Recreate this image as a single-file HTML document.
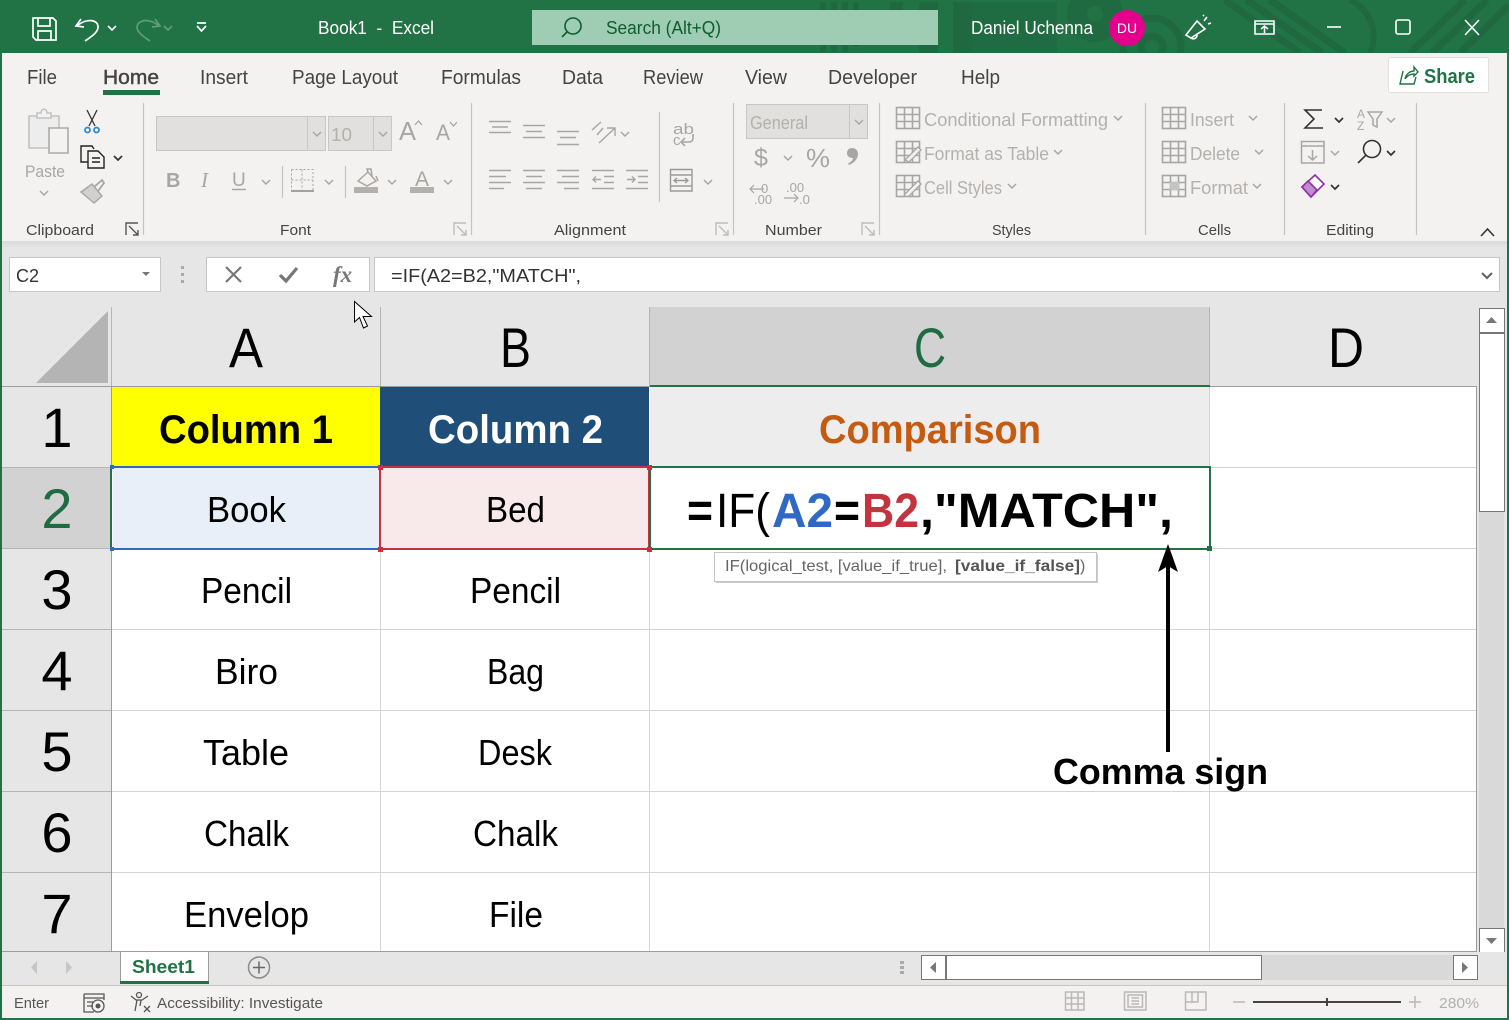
<!DOCTYPE html>
<html lang="en"><head><meta charset="utf-8"><title>Book1 - Excel</title>
<style>
html,body{margin:0;padding:0;width:1509px;height:1020px;overflow:hidden;background:#e6e6e6}
svg{display:block}
text{font-family:"Liberation Sans",Arial,sans-serif;white-space:pre}
.w{fill:#fff;font-size:18px}
.t{fill:#444;font-size:20px}
.g{fill:#444;font-size:15px}
.d{fill:#b3b0ad;font-size:18px}
.h{fill:#000;font-size:56px}
.c{fill:#000;font-size:36px}
.i{fill:none;stroke:#a6a6a6;stroke-width:1.5}
.l{stroke:#d4d4d4;stroke-width:1}
.hl{stroke:#b5b5b5;stroke-width:1}
</style></head><body>
<svg width="1509" height="1020" viewBox="0 0 1509 1020" xmlns="http://www.w3.org/2000/svg">
<defs>
<path id="ch" d="M-4-2 0 2 4-2" fill="none" stroke="#a6a6a6" stroke-width="1.5"/>
<path id="cd" d="M-4-2 0 2 4-2" fill="none" stroke="#333" stroke-width="1.7"/>
<path id="dl" d="M-6 6V-6H6M-3-3 6 6M6 1V6H1" fill="none" stroke="#bdbdbd" stroke-width="1.4"/>
<g id="ti" fill="none" stroke="#a6a6a6" stroke-width="1.6"><rect x="0" y="0" width="23" height="21"/><path d="M0 7H23M0 14H23M8 0V21M16 0V21"/></g>
</defs>
<rect width="1509" height="1020" fill="#e6e6e6"/>

<!-- title bar -->
<rect width="1509" height="53" fill="#217346"/>
<g fill="#1f6840">
<rect x="820" y="2" width="6" height="50"/><rect x="831" y="2" width="6" height="50"/><rect x="842" y="2" width="6" height="50"/><rect x="853" y="2" width="6" height="45"/>
<rect x="890" y="2" width="13" height="18"/><rect x="919" y="2" width="19" height="51"/><rect x="953" y="2" width="19" height="51"/><rect x="972" y="2" width="85" height="51" opacity=".7"/>
</g>
<g fill="none" stroke="#1f6840">
<circle cx="1152" cy="47" r="11" stroke-width="7"/><circle cx="1152" cy="47" r="29" stroke-width="7"/>
<circle cx="1095" cy="14" r="18" stroke-width="20" opacity=".8"/>
<path d="M1225 0 1300 53M1247 0 1322 53M1270 0 1345 53" stroke-width="7"/>
<path d="M1410 53 1465 0M1432 53 1487 0M1460 53 1509 5" stroke-width="7"/>
<path d="M1350 0A40 40 0 0 1 1370 53" stroke-width="6"/>
</g>
<g fill="none" stroke="#fff" stroke-width="1.7">
<path d="M33 18H53L56 21V40H36L33 37ZM38 18V26H50V18M38 40V31H51V40"/>
<path d="M81 19 76 26 84 27M77 26C86 18 99 19 98 28 97 33 91 37 85 41"/>
<path d="M108 26 112 30 116 26" stroke-width="1.6"/>
<path d="M155 19 160 26 152 27M159 26C150 18 137 19 137 28 138 33 144 37 150 41M164 26 168 30 172 26" stroke="#5f9c79"/>
<path d="M197 23H206M197 26 201.500 31 206 26"/>
</g>
<text x="318" y="34" class="w" textLength="116" lengthAdjust="spacingAndGlyphs">Book1  -  Excel</text>
<rect x="532" y="10" width="406" height="35" fill="#9fcdb3"/>
<g fill="none" stroke="#0e5c2f" stroke-width="1.6"><circle cx="573" cy="26" r="8"/><path d="M567 32 562 37"/></g>
<text x="606" y="34" fill="#0e5c2f" font-size="18" textLength="115" lengthAdjust="spacingAndGlyphs">Search (Alt+Q)</text>
<text x="971" y="34" class="w" textLength="122" lengthAdjust="spacingAndGlyphs">Daniel Uchenna</text>
<circle cx="1127" cy="28" r="18" fill="#e3008c"/>
<text x="1127" y="33" fill="#fff" font-size="14" text-anchor="middle">DU</text>
<g fill="none" stroke="#fff" stroke-width="1.6">
<path d="M1186 35 1197 21 1205 29 1191 38ZM1191 38C1194 40 1197 38 1197 35M1204 21 1207 17M1208 24 1211 23M1203 16 1204 15"/>
<path d="M1255 21H1274V34H1255ZM1255 24H1274M1264.500 33V27M1261 29 1264.500 26 1268 29"/>
<path d="M1327 27H1341"/>
<rect x="1396" y="20" width="14" height="14" rx="2"/>
<path d="M1465 20 1479 35M1479 20 1465 35"/>
</g>

<!-- ribbon -->
<rect x="2" y="53" width="1505" height="188" fill="#f3f2f1"/>
<rect x="2" y="241" width="1505" height="8" fill="#dcdcdc"/>
<rect x="2" y="244" width="1505" height="3" fill="#e1e1e1"/>
<rect x="2" y="247" width="1505" height="3" fill="#e6e6e6"/>
<text x="27" y="84" class="t" textLength="30" lengthAdjust="spacingAndGlyphs">File</text>
<text x="103" y="84" class="t" style="stroke:#444;stroke-width:.45" textLength="56" lengthAdjust="spacingAndGlyphs">Home</text>
<rect x="103" y="90" width="57" height="5" fill="#217346"/>
<text x="200" y="84" class="t" textLength="48" lengthAdjust="spacingAndGlyphs">Insert</text>
<text x="292" y="84" class="t" textLength="106" lengthAdjust="spacingAndGlyphs">Page Layout</text>
<text x="441" y="84" class="t" textLength="80" lengthAdjust="spacingAndGlyphs">Formulas</text>
<text x="562" y="84" class="t" textLength="41" lengthAdjust="spacingAndGlyphs">Data</text>
<text x="643" y="84" class="t" textLength="60" lengthAdjust="spacingAndGlyphs">Review</text>
<text x="745" y="84" class="t" textLength="42" lengthAdjust="spacingAndGlyphs">View</text>
<text x="828" y="84" class="t" textLength="89" lengthAdjust="spacingAndGlyphs">Developer</text>
<text x="961" y="84" class="t" textLength="39" lengthAdjust="spacingAndGlyphs">Help</text>
<rect x="1388.500" y="57.500" width="100" height="35" rx="2" fill="#fff" stroke="#e1dfdd"/>
<g fill="none" stroke="#217346" stroke-width="1.4"><path d="M1403 71 1400 84H1414L1416 77M1405 79C1406 74 1410 71 1414 71V67L1418 72 1414 76V74C1410 74 1407 76 1405 79"/></g>
<text x="1424" y="83" fill="#217346" font-size="20" font-weight="700" textLength="51" lengthAdjust="spacingAndGlyphs">Share</text>

<g stroke="#c4c4c4" stroke-width="1.200">
<path d="M143.500 103V235M471.500 103V235M733.500 103V235M879.500 103V235M1145.500 103V235M1284.500 103V235M1416.500 103V235M659.500 112V202M282.500 166V198M345.500 166V198"/>
</g>
<text x="26" y="235" class="g" textLength="68" lengthAdjust="spacingAndGlyphs">Clipboard</text>
<text x="280" y="235" class="g" textLength="31" lengthAdjust="spacingAndGlyphs">Font</text>
<text x="554" y="235" class="g" textLength="72" lengthAdjust="spacingAndGlyphs">Alignment</text>
<text x="765" y="235" class="g" textLength="57" lengthAdjust="spacingAndGlyphs">Number</text>
<text x="992" y="235" class="g" textLength="39" lengthAdjust="spacingAndGlyphs">Styles</text>
<text x="1198" y="235" class="g" textLength="33" lengthAdjust="spacingAndGlyphs">Cells</text>
<text x="1326" y="235" class="g" textLength="48" lengthAdjust="spacingAndGlyphs">Editing</text>
<path d="M126 235V223H138M129 226 138 235M138 230V235H133" fill="none" stroke="#555" stroke-width="1.4"/>
<use href="#dl" x="460" y="229"/><use href="#dl" x="722" y="229"/><use href="#dl" x="868" y="229"/>

<!-- clipboard -->
<g class="i">
<path fill="#ededed" stroke="#c2c2c2" stroke-width="1.600" d="M29 116H59V148H29Z"/>
<path fill="#f3f2f1" stroke="#c2c2c2" stroke-width="1.600" d="M37 118V113H41C41 108 47 108 47 113H51V118Z"/>
<path fill="#f3f2f1" stroke="#aaa" stroke-width="1.600" d="M49 128H68V153H49Z"/>
</g>
<text x="25" y="177" fill="#a6a6a6" font-size="17" textLength="40" lengthAdjust="spacingAndGlyphs">Paste</text>
<use href="#ch" x="44" y="193"/>
<g fill="none" stroke="#333" stroke-width="1.300"><path d="M87 110 95 126M97 110 89 126"/></g>
<g fill="none" stroke="#2b88d8" stroke-width="1.800"><circle cx="87.500" cy="130" r="2.500"/><circle cx="96.500" cy="130" r="2.500"/></g>
<g fill="none" stroke="#222" stroke-width="1.400"><path d="M88 162H81V146H92L94 149"/><path d="M88 151H98L104 157V168H88ZM92 158H100M92 162H100"/></g>
<use href="#cd" x="118" y="158"/>
<path d="M81 192 92 184 102 196 94 203Z" fill="#d0d0d0" stroke="#a6a6a6" stroke-width="1.400"/><path d="M94 187 102 180 104 183 98 191" fill="none" stroke="#a6a6a6" stroke-width="1.800"/>

<!-- font -->
<g fill="#e1e0de" stroke="#c8c6c4" stroke-width="1"><rect x="156.500" y="116.500" width="169" height="34"/><rect x="328.500" y="116.500" width="63" height="34"/><path d="M307.500 116.500V150.500M373.500 116.500V150.500" fill="none"/></g>
<use href="#ch" x="317" y="134"/><use href="#ch" x="383" y="134"/>
<text x="331" y="141" class="d" textLength="21" lengthAdjust="spacingAndGlyphs">10</text>
<text x="399" y="140" fill="#a6a6a6" font-size="26" textLength="17" lengthAdjust="spacingAndGlyphs">A</text><path d="M415 125 418.500 121 422 125" fill="none" stroke="#a6a6a6" stroke-width="1.300"/>
<text x="436" y="140" fill="#a6a6a6" font-size="22" textLength="14" lengthAdjust="spacingAndGlyphs">A</text><path d="M450 122 453.500 126 457 122" fill="none" stroke="#a6a6a6" stroke-width="1.300"/>
<text x="166" y="187" fill="#a6a6a6" font-size="20" font-weight="700">B</text>
<text x="201" y="187" fill="#a6a6a6" font-size="21" font-style="italic" style="font-family:'Liberation Serif',serif">I</text>
<text x="232" y="186" fill="#a6a6a6" font-size="19">U</text><path d="M232 189.500H246" stroke="#a6a6a6" stroke-width="1.500"/>
<use href="#ch" x="266" y="182"/>
<path d="M291.500 169.500H313V190M291.500 169.500V190M302 169.500V190M291.500 180H313" fill="none" stroke="#a6a6a6" stroke-dasharray="2 2"/><path d="M291 191H314" stroke="#888" stroke-width="1.500"/>
<use href="#ch" x="329" y="182"/>
<path d="M358 181 368 172 376 181 367 186ZM368 172 367 169H371L372 176M376 176 378 181" fill="none" stroke="#a6a6a6" stroke-width="1.500"/><rect x="354" y="187" width="24" height="6" fill="#b3b0ad"/>
<use href="#ch" x="392" y="182"/>
<text x="415" y="186" fill="#a6a6a6" font-size="21">A</text><rect x="410" y="187" width="24" height="6" fill="#b3b0ad"/>
<use href="#ch" x="448" y="182"/>

<!-- alignment -->
<g fill="none" stroke="#a6a6a6" stroke-width="1.400">
<path d="M489 121.500H511M492 127H508M489 132.500H511"/>
<path d="M523 125.500H545M526 131.500H542M523 137.500H545"/>
<path d="M557 131.500H579M560 137.500H576M557 144.500H579"/>
<path d="M599 143 615 128M607 128H615V136M592 130 601 122M597 135 603 128"/>
<path d="M489 170.500H511M489 176.500H506M489 182.500H511M489 188.500H504"/>
<path d="M523 170.500H545M526 176.500H542M523 182.500H545M526 188.500H542"/>
<path d="M557 170.500H579M562 176.500H579M557 182.500H579M564 188.500H579"/>
<path d="M592 170.500H614M604 176.500H614M604 182.500H614M592 188.500H614M601 179.500H593M596 176.500 593 179.500 596 182.500"/>
<path d="M626 170.500H648M638 176.500H648M638 182.500H648M626 188.500H648M627 179.500H635M632 176.500 635 179.500 632 182.500"/>
<path d="M670.500 169.500H692V191H670.500ZM670.500 175H692M670.500 186H692M674 180.500H688M677 178 674 180.500 677 183M685 178 688 180.500 685 183" stroke="#999"/>
<path d="M693 134V138C693 141 691 142 689 142H682M685 138 681 142 685 146" stroke-width="1.600"/>
</g>
<use href="#ch" x="625" y="134"/><use href="#ch" x="708" y="182"/>
<text x="673" y="134" fill="#a6a6a6" font-size="15" textLength="21" lengthAdjust="spacingAndGlyphs">ab</text>
<text x="673" y="145" fill="#a6a6a6" font-size="15">c</text>

<!-- number -->
<g fill="#e1e0de" stroke="#c8c6c4"><rect x="746.500" y="104.500" width="121" height="34"/><path d="M849.500 104.500V138.500" fill="none"/></g>
<use href="#ch" x="859" y="122"/>
<text x="750" y="129" class="d" textLength="58" lengthAdjust="spacingAndGlyphs">General</text>
<text x="754" y="166" fill="#a6a6a6" font-size="25">$</text><use href="#ch" x="788" y="158"/>
<text x="806" y="167" fill="#a6a6a6" font-size="26" textLength="24" lengthAdjust="spacingAndGlyphs">%</text>
<path d="M852 148C856 148 858 151 858 154 858 159 854 163 849 165L848 163.500C851 162 853 160 853 158 849 158 847 156 847 153 847 150 849 148 852 148Z" fill="#a6a6a6"/>
<text x="761" y="193" fill="#a6a6a6" font-size="13">0</text><text x="754" y="204" fill="#a6a6a6" font-size="13">.00</text>
<text x="786" y="192" fill="#a6a6a6" font-size="13">.00</text><text x="799" y="204" fill="#a6a6a6" font-size="13">.0</text>
<path d="M764 189H750M754 185 750 189 754 193M784 198H798M794 194 798 198 794 202" fill="none" stroke="#a6a6a6" stroke-width="1.200"/>

<!-- styles -->
<use href="#ti" x="896.500" y="107.500"/><use href="#ti" x="896.500" y="141.500"/><use href="#ti" x="896.500" y="175.500"/>
<path d="M905 160 918 147 921 150 909 162ZM905 194 918 181 921 184 909 196" fill="#f3f2f1" stroke="#a6a6a6" stroke-width="1.300"/>
<text x="924" y="126" class="d" textLength="184" lengthAdjust="spacingAndGlyphs">Conditional Formatting</text><use href="#ch" x="1118" y="118"/>
<text x="924" y="160" class="d" textLength="125" lengthAdjust="spacingAndGlyphs">Format as Table</text><use href="#ch" x="1058" y="152"/>
<text x="924" y="194" class="d" textLength="78" lengthAdjust="spacingAndGlyphs">Cell Styles</text><use href="#ch" x="1012" y="186"/>

<!-- cells -->
<use href="#ti" x="1162.500" y="107.500"/><use href="#ti" x="1162.500" y="141.500"/><use href="#ti" x="1162.500" y="175.500"/>
<rect x="1170" y="182" width="9" height="8" fill="#c4c4c4"/>
<text x="1190" y="126" class="d" textLength="44" lengthAdjust="spacingAndGlyphs">Insert</text><use href="#ch" x="1253" y="118"/>
<text x="1190" y="160" class="d" textLength="50" lengthAdjust="spacingAndGlyphs">Delete</text><use href="#ch" x="1259" y="152"/>
<text x="1190" y="194" class="d" textLength="58" lengthAdjust="spacingAndGlyphs">Format</text><use href="#ch" x="1257" y="186"/>

<!-- editing -->
<path d="M1322 110H1305L1314 119 1305 128H1323" fill="none" stroke="#333" stroke-width="1.600"/><use href="#cd" x="1339" y="120"/>
<text x="1357" y="118" fill="#a6a6a6" font-size="12">A</text><text x="1357" y="130" fill="#a6a6a6" font-size="12">Z</text>
<path d="M1368 112H1382L1377 119V127L1373 125V119Z" fill="none" stroke="#a6a6a6" stroke-width="1.500"/><use href="#ch" x="1391" y="120"/>
<path d="M1301.500 141.500H1324V163H1301.500ZM1301.500 146H1324M1312.500 150V160M1308 156 1312.500 160 1317 156" fill="none" stroke="#a6a6a6" stroke-width="1.500"/><use href="#ch" x="1335" y="153"/>
<g fill="none" stroke="#333" stroke-width="1.600"><circle cx="1372" cy="149" r="8.500"/><path d="M1366 155 1358 163"/></g><use href="#cd" x="1391" y="153"/>
<path d="M1302 187 1315 175 1324 184 1311 197Z" fill="#fff" stroke="#8f2fa5" stroke-width="1.600"/><path d="M1302 187 1308 181 1317 190 1311 197Z" fill="#c08bd0" stroke="#8f2fa5" stroke-width="1.600"/>
<use href="#cd" x="1335" y="187"/>
<path d="M1481 236 1487.500 229 1494 236" fill="none" stroke="#333" stroke-width="1.600"/>

<!-- formula bar -->
<g fill="#fff" stroke="#c8c6c4" stroke-width="1">
<rect x="9.500" y="257.500" width="151" height="34"/>
<rect x="206.500" y="257.500" width="163" height="34"/>
<rect x="374.500" y="257.500" width="1125" height="34"/>
</g>
<text x="16" y="282" fill="#333" font-size="18" textLength="23" lengthAdjust="spacingAndGlyphs">C2</text>
<path d="M142 272H150L146 276Z" fill="#777"/>
<g fill="#aaa"><rect x="181" y="266" width="3" height="3"/><rect x="181" y="273" width="3" height="3"/><rect x="181" y="280" width="3" height="3"/></g>
<path d="M226 267 241 282M241 267 226 282" stroke="#777" stroke-width="2.200" fill="none"/>
<path d="M280 275 286 281 297 268" stroke="#777" stroke-width="3.200" fill="none"/>
<text x="333" y="282" fill="#777" font-size="23" font-style="italic" font-weight="700" style="font-family:'Liberation Serif',serif">fx</text>
<text x="391" y="282" fill="#333" font-size="18" textLength="190" lengthAdjust="spacingAndGlyphs">=IF(A2=B2,"MATCH",</text>
<path d="M1482 273 1487 278 1492 273" fill="none" stroke="#666" stroke-width="2.200"/>

<!-- sheet headers -->
<rect x="650" y="307" width="560" height="79" fill="#d2d2d2"/>
<rect x="2" y="468" width="109" height="81" fill="#d2d2d2"/>
<path d="M108 311V383H36Z" fill="#b4b4b4"/>
<g class="hl">
<path d="M111.500 307V386M380.500 307V386M649.500 307V386M1209.500 307V386"/>
<path d="M2 467.500H111M2 548.500H111M2 629.500H111M2 710.500H111M2 791.500H111M2 872.500H111"/>
</g>
<!-- cells fill -->
<rect x="112" y="387" width="1364" height="564" fill="#fff"/>
<rect x="112" y="387" width="268" height="80" fill="#ff0"/>
<rect x="380" y="387" width="269" height="80" fill="#1f4e78"/>
<rect x="650" y="387" width="559" height="80" fill="#ededed"/>
<rect x="113" y="468" width="267" height="81" fill="#e9eff8"/>
<rect x="381" y="468" width="268" height="81" fill="#f8e9ea"/>
<g class="l">
<path d="M1210 467.500H1476M112 548.500H1476M112 629.500H1476M112 710.500H1476M112 791.500H1476M112 872.500H1476"/>
<path d="M380.500 549V951M649.500 549V951M1209.500 387V951"/>
</g>
<path d="M2 386.500H1477M111.500 386V951M1476.500 386V951M2 951.500H1477" stroke="#9c9c9c" fill="none"/>
<rect x="650" y="385" width="560" height="2" fill="#217346"/>
<rect x="110" y="468" width="2" height="81" fill="#217346"/>

<text x="229" y="367" class="h" textLength="34" lengthAdjust="spacingAndGlyphs">A</text>
<text x="500" y="367" class="h" textLength="31" lengthAdjust="spacingAndGlyphs">B</text>
<text x="914" y="367" class="h" style="fill:#1f6b42" textLength="32" lengthAdjust="spacingAndGlyphs">C</text>
<text x="1328" y="367" class="h" textLength="36" lengthAdjust="spacingAndGlyphs">D</text>
<text x="57" y="447" class="h" text-anchor="middle">1</text>
<text x="57" y="528" class="h" text-anchor="middle" style="fill:#1f6b42">2</text>
<text x="57" y="609" class="h" text-anchor="middle">3</text>
<text x="57" y="690" class="h" text-anchor="middle">4</text>
<text x="57" y="771" class="h" text-anchor="middle">5</text>
<text x="57" y="852" class="h" text-anchor="middle">6</text>
<text x="57" y="933" class="h" text-anchor="middle">7</text>

<text x="159" y="443" font-size="40" font-weight="700" fill="#000" textLength="174" lengthAdjust="spacingAndGlyphs">Column 1</text>
<text x="428" y="443" font-size="40" font-weight="700" fill="#fff" textLength="175" lengthAdjust="spacingAndGlyphs">Column 2</text>
<text x="819" y="443" font-size="40" font-weight="700" fill="#c55a11" textLength="222" lengthAdjust="spacingAndGlyphs">Comparison</text>

<text x="207" y="522" class="c" textLength="79" lengthAdjust="spacingAndGlyphs">Book</text>
<text x="486" y="522" class="c" textLength="59" lengthAdjust="spacingAndGlyphs">Bed</text>
<text x="201" y="603" class="c" textLength="91" lengthAdjust="spacingAndGlyphs">Pencil</text>
<text x="470" y="603" class="c" textLength="91" lengthAdjust="spacingAndGlyphs">Pencil</text>
<text x="215" y="684" class="c" textLength="63" lengthAdjust="spacingAndGlyphs">Biro</text>
<text x="487" y="684" class="c" textLength="57" lengthAdjust="spacingAndGlyphs">Bag</text>
<text x="203" y="765" class="c" textLength="86" lengthAdjust="spacingAndGlyphs">Table</text>
<text x="478" y="765" class="c" textLength="74" lengthAdjust="spacingAndGlyphs">Desk</text>
<text x="204" y="846" class="c" textLength="85" lengthAdjust="spacingAndGlyphs">Chalk</text>
<text x="473" y="846" class="c" textLength="85" lengthAdjust="spacingAndGlyphs">Chalk</text>
<text x="184" y="927" class="c" textLength="125" lengthAdjust="spacingAndGlyphs">Envelop</text>
<text x="489" y="927" class="c" textLength="54" lengthAdjust="spacingAndGlyphs">File</text>

<!-- selection outlines -->
<path d="M112 467H380M112 549H380" fill="none" stroke="#2f69c4" stroke-width="2"/>
<path d="M380 549V467H649V549Z" fill="none" stroke="#c5333f" stroke-width="2"/>
<rect x="650" y="467" width="560" height="82" fill="#fff" stroke="#217346" stroke-width="2"/>
<rect x="110" y="465" width="4" height="4" fill="#2f69c4"/>
<rect x="110" y="547" width="4" height="4" fill="#2f69c4"/>
<rect x="378" y="465" width="5" height="5" fill="#c5333f"/><rect x="378" y="547" width="5" height="5" fill="#c5333f"/>
<rect x="647" y="465" width="5" height="5" fill="#c5333f"/><rect x="647" y="547" width="5" height="5" fill="#c5333f"/>
<rect x="1207" y="546" width="5" height="5" fill="#217346"/>

<text x="687" y="527" font-size="48" font-weight="700" fill="#000" textLength="26" lengthAdjust="spacingAndGlyphs">=</text>
<text x="716" y="527" font-size="48" fill="#000" textLength="54" lengthAdjust="spacingAndGlyphs">IF(</text>
<text x="772" y="527" font-size="48" font-weight="700" fill="#2f69c4" textLength="61" lengthAdjust="spacingAndGlyphs">A2</text>
<text x="834" y="527" font-size="48" font-weight="700" fill="#000" textLength="26" lengthAdjust="spacingAndGlyphs">=</text>
<text x="862" y="527" font-size="48" font-weight="700" fill="#c5333f" textLength="57" lengthAdjust="spacingAndGlyphs">B2</text>
<text x="920" y="527" font-size="48" font-weight="700" fill="#000" textLength="253" lengthAdjust="spacingAndGlyphs">,"MATCH",</text>

<!-- tooltip -->
<rect x="716" y="554" width="382" height="29" fill="#ccc"/>
<rect x="714.500" y="552.500" width="382" height="29" fill="#fff" stroke="#c4c4c4"/>
<text x="725" y="571" fill="#666" font-size="16" textLength="222" lengthAdjust="spacingAndGlyphs">IF(logical_test, [value_if_true],</text>
<text x="955" y="571" fill="#555" font-size="16" font-weight="700" textLength="125" lengthAdjust="spacingAndGlyphs">[value_if_false]</text>
<text x="1080" y="571" fill="#666" font-size="16">)</text>

<!-- arrow -->
<rect x="1166" y="566" width="4" height="186" fill="#000"/>
<path d="M1168 544 1178 572 1168 566 1158 572Z" fill="#000"/>
<text x="1053" y="784" font-size="36" font-weight="700" fill="#000" textLength="215" lengthAdjust="spacingAndGlyphs">Comma sign</text>

<!-- cursor -->
<path d="M354.500 301.500V322L359.500 317.500 363.500 328 367.500 326 363 316.500H371.500Z" fill="#fff" stroke="#000" stroke-width="1"/>

<!-- vertical scrollbar -->
<rect x="1477" y="307" width="30" height="645" fill="#e6e6e6"/>
<rect x="1479" y="511" width="25" height="417" fill="#d9d9d9"/>
<rect x="1479.500" y="308.500" width="25" height="24" fill="#fff" stroke="#777"/>
<rect x="1479.500" y="333.500" width="25" height="178" fill="#fff" stroke="#777"/>
<rect x="1479" y="332" width="26" height="2" fill="#777"/>
<path d="M1486 323H1497L1491.500 317Z" fill="#777"/>
<rect x="1479.500" y="928.500" width="25" height="24" fill="#fff" stroke="#777"/>
<path d="M1486 938H1497L1491.500 944Z" fill="#777"/>

<!-- tabs -->
<rect x="2" y="952" width="1505" height="33" fill="#e6e6e6"/>
<path d="M2 951.500H1476" stroke="#9c9c9c"/>
<path d="M120.500 952V982H208.500V952" fill="#fff" stroke="#9c9c9c"/>
<rect x="120" y="981" width="89" height="3" fill="#217346"/>
<text x="132" y="973" fill="#217346" font-size="18" font-weight="700" textLength="63" lengthAdjust="spacingAndGlyphs">Sheet1</text>
<path d="M37 961 31 967.500 37 974ZM66 961 72 967.500 66 974Z" fill="#c8c6c4"/>
<circle cx="259" cy="967.500" r="10.500" fill="none" stroke="#8a8a8a" stroke-width="1.500"/>
<path d="M253 967.500H265M259 961.500V973.500" stroke="#666" stroke-width="1.500"/>
<g fill="#aaa"><rect x="900" y="961" width="4" height="3"/><rect x="900" y="966" width="4" height="3"/><rect x="900" y="971" width="4" height="3"/></g>
<rect x="921" y="955" width="557" height="25" fill="#d9d9d9"/>
<rect x="921.500" y="955.500" width="24" height="24" fill="#fff" stroke="#777"/>
<rect x="946.500" y="955.500" width="315" height="24" fill="#fff" stroke="#777"/>
<rect x="1453.500" y="955.500" width="24" height="24" fill="#fff" stroke="#777"/>
<path d="M936 962V973L930 967.500ZM1462 962V973L1468 967.500Z" fill="#777"/>

<!-- status bar -->
<rect x="2" y="986" width="1505" height="32" fill="#f3f2f1"/>
<path d="M2 985.500H1507" stroke="#c8c6c4"/>
<text x="14" y="1008" fill="#555" font-size="15" textLength="35" lengthAdjust="spacingAndGlyphs">Enter</text>
<g fill="none" stroke="#555" stroke-width="1.300"><path d="M84 994H104V1000M84 994V1012H94M84 998H104M87 1002H93M87 1006H93"/><circle cx="98" cy="1006" r="6"/></g><circle cx="98" cy="1006" r="2.500" fill="#555"/>
<g fill="none" stroke="#555" stroke-width="1.300"><circle cx="139" cy="995" r="2.500"/><path d="M131 996 136 1000H142L148 996M137 1000 135 1011M141 1000 140 1006M144 1006 150 1012M150 1006 144 1012"/></g>
<text x="157" y="1008" fill="#555" font-size="15" textLength="166" lengthAdjust="spacingAndGlyphs">Accessibility: Investigate</text>
<g fill="none" stroke="#b8b8b8" stroke-width="1.500">
<path d="M1065.500 992H1084V1010H1065.500ZM1065.500 998H1084M1065.500 1004H1084M1071.500 992V1010M1078 992V1010"/>
<path d="M1124.500 992H1146V1010H1124.500ZM1128 995H1142.500V1007H1128ZM1131.500 998H1139M1131.500 1001H1139M1131.500 1004H1139"/>
<path d="M1185.500 992H1206V1010H1185.500ZM1185.500 1002H1198V992M1192 992V1002"/>
<path d="M1233 1002H1245M1409 1002H1421M1415 996V1008"/>
</g>
<rect x="1253" y="1001" width="148" height="2" fill="#444"/>
<rect x="1326" y="998" width="2" height="8" fill="#444"/>
<text x="1439" y="1008" fill="#b3b0ad" font-size="15" textLength="40" lengthAdjust="spacingAndGlyphs">280%</text>

<!-- window border -->
<rect x="0" y="53" width="2" height="967" fill="#217346"/>
<rect x="1507" y="53" width="2" height="967" fill="#217346"/>
<rect x="0" y="1018" width="1509" height="2" fill="#217346"/>
</svg>
</body></html>
